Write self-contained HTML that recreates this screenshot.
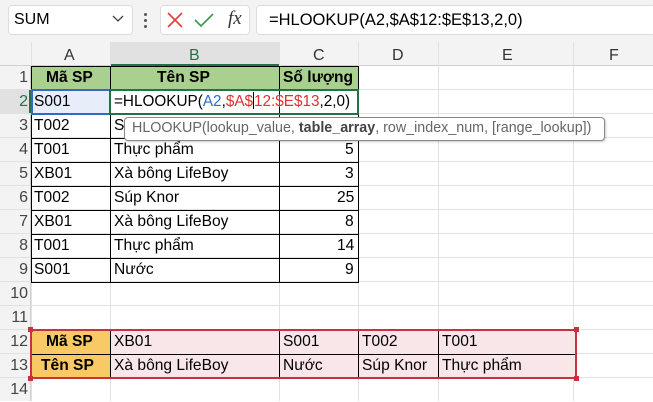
<!DOCTYPE html>
<html><head><meta charset="utf-8"><style>
body{margin:0;width:653px;height:401px;overflow:hidden;background:#fff;font-family:"Liberation Sans",Arial,sans-serif;position:relative}
.a{position:absolute;box-sizing:border-box}
.t{position:absolute;font-size:15.6px;line-height:24px;white-space:nowrap;color:#000}
</style></head><body>
<div class="a" style="left:0;top:0;width:653px;height:42px;background:#f3f3f3"></div>
<div class="a" style="left:8px;top:5px;width:125px;height:30px;background:#fff;border:1px solid #ddd;border-radius:4px"></div>
<div class="t" style="left:14px;top:8px;font-size:16px">SUM</div>
<svg class="a" style="left:112px;top:15px" width="12" height="8"><path d="M1 1L6 6L11 1" stroke="#444" fill="none" stroke-width="1.3"/></svg>
<div class="a" style="left:144px;top:13px;width:3px;height:3px;background:#555;border-radius:2px"></div>
<div class="a" style="left:144px;top:19px;width:3px;height:3px;background:#555;border-radius:2px"></div>
<div class="a" style="left:144px;top:25px;width:3px;height:3px;background:#555;border-radius:2px"></div>
<div class="a" style="left:160px;top:5px;width:90px;height:30px;background:#fff;border:1px solid #ddd;border-radius:4px"></div>
<svg class="a" style="left:167px;top:12px" width="16" height="16"><path d="M1 1L15 15M15 1L1 15" stroke="#e0403a" stroke-width="1.6"/></svg>
<svg class="a" style="left:194px;top:12px" width="20" height="16"><path d="M1 8L7 14L19 2" stroke="#3a9a4a" stroke-width="1.6" fill="none"/></svg>
<div class="t" style="left:228px;top:7px;font-family:'Liberation Serif',serif;font-style:italic;font-size:19px;color:#333">fx</div>
<div class="a" style="left:256px;top:5px;width:400px;height:30px;background:#fff;border:1px solid #ddd;border-radius:4px"></div>
<div class="t" style="left:269px;top:8px;font-size:16.5px">=HLOOKUP(A2,$A$12:$E$13,2,0)</div>

<div class="a" style="left:0;top:42px;width:653px;height:24px;background:#f3f3f3;border-bottom:1px solid #d0d0d0"></div>
<div class="a" style="left:0;top:66px;width:31px;height:335px;background:#f3f3f3;border-right:1px solid #d0d0d0"></div>
<div class="a" style="left:110px;top:42px;width:169px;height:24px;background:#e1e1e1;border-bottom:2px solid #217346"></div>
<div class="a" style="left:0;top:90px;width:31px;height:24px;background:#e1e1e1;border-right:2px solid #217346"></div>
<div class="t" style="left:64px;top:44px;color:#333;font-size:16px">A</div>
<div class="t" style="left:189px;top:44px;color:#217346;font-size:16px">B</div>
<div class="t" style="left:313px;top:44px;color:#333;font-size:16px">C</div>
<div class="t" style="left:392px;top:44px;color:#333;font-size:16px">D</div>
<div class="t" style="left:502px;top:44px;color:#333;font-size:16px">E</div>
<div class="t" style="left:609px;top:44px;color:#333;font-size:16px">F</div>
<svg class="a" style="left:0;top:42px" width="653" height="359">
<g stroke="#e1e1e1" stroke-width="1">
<path d="M31.5 0V359M110.5 0V359M279.5 0V359M358.5 0V359M438.5 0V359M573.5 0V359"/>
<path d="M0 47.5H653M0 71.5H653M0 95.5H653M0 119.5H653M0 143.5H653M0 167.5H653M0 191.5H653M0 215.5H653M0 239.5H653M0 263.5H653M0 287.5H653M0 311.5H653M0 335.5H653"/>
</g></svg>
<div class="a" style="left:31px;top:66px;width:327px;height:24px;background:#a9d08e"></div>
<svg class="a" style="left:0;top:0" width="653" height="401">
<g stroke="#000" stroke-width="1" fill="none">
<path d="M31.5 66V282M110.5 66V282M279.5 66V282M358.5 66V282"/>
<path d="M31 66.5H359M31 90.5H359M31 114.5H359M31 138.5H359M31 162.5H359M31 186.5H359M31 210.5H359M31 234.5H359M31 258.5H359M31 282.5H359"/>
</g></svg>
<div class="a" style="left:32px;top:91px;width:78px;height:23px;background:#e8eef9"></div>
<div class="a" style="left:31px;top:89px;width:80px;height:26px;border:2px solid #2e6bc7"></div>
<div class="a" style="left:109px;top:89px;width:250px;height:26px;border:2px solid #217346"></div>
<div class="t" style="left:46px;top:66px;font-weight:bold">Mã SP</div>
<div class="t" style="left:157px;top:66px;font-weight:bold">Tên SP</div>
<div class="t" style="left:283px;top:66px;font-weight:bold">Số lượng</div>
<div class="t" style="left:34px;top:90px">S001</div>
<div class="t" style="left:114px;top:90px;font-size:15.3px">=HLOOKUP(<span style="color:#2e6bc7">A2</span>,<span style="color:#d33">$A$</span><span style="display:inline-block;width:1px;height:17px;background:#000;vertical-align:-3px"></span><span style="color:#d33">12:$E$13</span>,2,0)</div>
<div class="t" style="left:34px;top:114px">T002</div><div class="t" style="left:114px;top:114px">S</div>
<div class="t" style="left:34px;top:138px">T001</div><div class="t" style="left:114px;top:138px">Thực phẩm</div><div class="t" style="left:345px;top:138px">5</div>
<div class="t" style="left:34px;top:162px">XB01</div><div class="t" style="left:114px;top:162px">Xà bông LifeBoy</div><div class="t" style="left:345px;top:162px">3</div>
<div class="t" style="left:34px;top:186px">T002</div><div class="t" style="left:114px;top:186px">Súp Knor</div><div class="t" style="left:337px;top:186px">25</div>
<div class="t" style="left:34px;top:210px">XB01</div><div class="t" style="left:114px;top:210px">Xà bông LifeBoy</div><div class="t" style="left:345px;top:210px">8</div>
<div class="t" style="left:34px;top:234px">T001</div><div class="t" style="left:114px;top:234px">Thực phẩm</div><div class="t" style="left:337px;top:234px">14</div>
<div class="t" style="left:34px;top:258px">S001</div><div class="t" style="left:114px;top:258px">Nước</div><div class="t" style="left:345px;top:258px">9</div>
<div class="a" style="left:124px;top:117px;width:481px;height:24px;background:#fff;border:1px solid #888;border-radius:4px;box-shadow:1px 1px 2px rgba(0,0,0,.2)"></div>
<div class="t" style="left:132px;top:116px;font-size:14.3px;color:#666">HLOOKUP(lookup_value, <b style="color:#444">table_array</b>, row_index_num, [range_lookup])</div>

<div class="a" style="left:31px;top:330px;width:545px;height:48px;background:#f8e6e8"></div>
<div class="a" style="left:31px;top:330px;width:79px;height:48px;background:#f9c965"></div>
<svg class="a" style="left:0;top:0" width="653" height="401"><g stroke="#000" fill="none">
<path d="M110.5 331V378M279.5 331V378M358.5 331V378M438.5 331V378M31 354.5H576"/></g></svg>
<div class="a" style="left:30px;top:329px;width:547px;height:50px;border:2px solid #c8323c"></div>
<div class="a" style="left:28px;top:327px;width:5px;height:5px;background:#c8323c"></div>
<div class="a" style="left:574px;top:327px;width:5px;height:5px;background:#c8323c"></div>
<div class="a" style="left:28px;top:376px;width:5px;height:5px;background:#c8323c"></div>
<div class="a" style="left:574px;top:376px;width:5px;height:5px;background:#c8323c"></div>
<div class="t" style="left:46px;top:330px;font-weight:bold">Mã SP</div>
<div class="t" style="left:41px;top:354px;font-weight:bold">Tên SP</div>
<div class="t" style="left:114px;top:330px">XB01</div><div class="t" style="left:114px;top:354px">Xà bông LifeBoy</div>
<div class="t" style="left:283px;top:330px">S001</div><div class="t" style="left:283px;top:354px">Nước</div>
<div class="t" style="left:362px;top:330px">T002</div><div class="t" style="left:362px;top:354px">Súp Knor</div>
<div class="t" style="left:442px;top:330px">T001</div><div class="t" style="left:442px;top:354px">Thực phẩm</div>

<div class="t" style="left:0;width:28px;text-align:right;top:66px;color:#444;font-size:16px">1</div>
<div class="t" style="left:0;width:28px;text-align:right;top:90px;color:#217346;font-size:16px">2</div>
<div class="t" style="left:0;width:28px;text-align:right;top:114px;color:#444;font-size:16px">3</div>
<div class="t" style="left:0;width:28px;text-align:right;top:138px;color:#444;font-size:16px">4</div>
<div class="t" style="left:0;width:28px;text-align:right;top:162px;color:#444;font-size:16px">5</div>
<div class="t" style="left:0;width:28px;text-align:right;top:186px;color:#444;font-size:16px">6</div>
<div class="t" style="left:0;width:28px;text-align:right;top:210px;color:#444;font-size:16px">7</div>
<div class="t" style="left:0;width:28px;text-align:right;top:234px;color:#444;font-size:16px">8</div>
<div class="t" style="left:0;width:28px;text-align:right;top:258px;color:#444;font-size:16px">9</div>
<div class="t" style="left:0;width:28px;text-align:right;top:282px;color:#444;font-size:16px">10</div>
<div class="t" style="left:0;width:28px;text-align:right;top:306px;color:#444;font-size:16px">11</div>
<div class="t" style="left:0;width:28px;text-align:right;top:330px;color:#444;font-size:16px">12</div>
<div class="t" style="left:0;width:28px;text-align:right;top:354px;color:#444;font-size:16px">13</div>
<div class="t" style="left:0;width:28px;text-align:right;top:378px;color:#444;font-size:16px">14</div>
</body></html>
